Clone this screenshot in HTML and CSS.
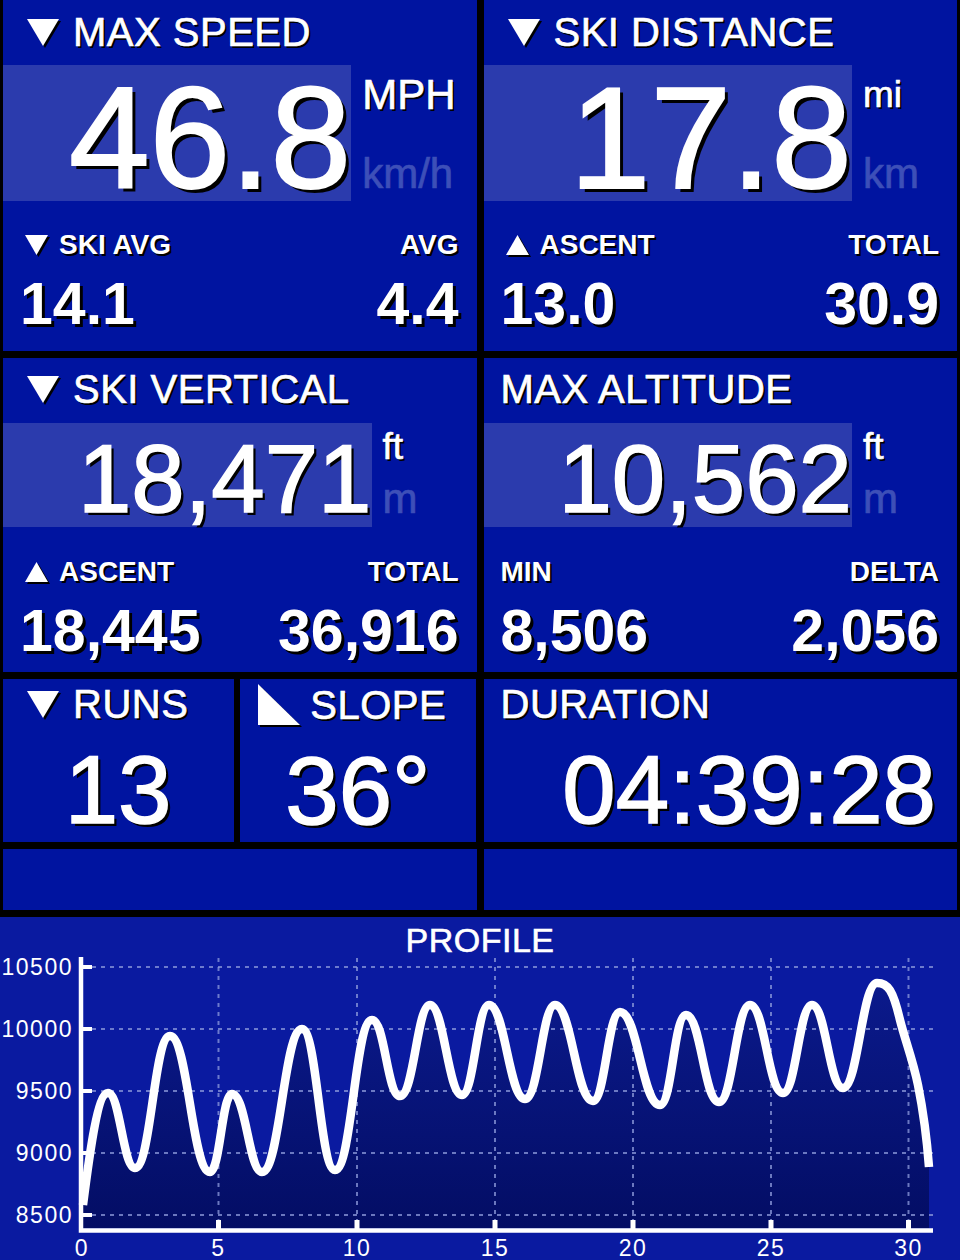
FILE: index.html
```html
<!DOCTYPE html>
<html lang="en">
<head>
  <meta charset="UTF-8">
  <title>Ski Stats</title>
  <link rel="stylesheet" href="styles.css">
</head>
<body>

  <div class="board">

    <!-- Max speed -->
    <div class="panel panel-big">
      <div class="title">
        <svg class="tri tri-title" viewBox="0 0 32 27"><polygon points="0,0 32,0 16,27"/></svg>
        MAX SPEED
      </div>
      <div class="reading">
        <div class="reading-box">46.8</div>
        <div class="units"><span>MPH</span><span class="alt">km/h</span></div>
      </div>
      <div class="stats">
        <div class="stat-row stat-labels">
          <span><svg class="tri tri-label" viewBox="0 0 23 20"><polygon points="0,0 23,0 11.5,20"/></svg>SKI AVG</span>
          <span>AVG</span>
        </div>
        <div class="stat-row stat-values"><span>14.1</span><span>4.4</span></div>
      </div>
    </div>

    <!-- Ski distance -->
    <div class="panel panel-big">
      <div class="title">
        <svg class="tri tri-title" viewBox="0 0 32 27"><polygon points="0,0 32,0 16,27"/></svg>
        SKI DISTANCE
      </div>
      <div class="reading">
        <div class="reading-box">17.8</div>
        <div class="units"><span class="sm">mi</span><span class="alt">km</span></div>
      </div>
      <div class="stats">
        <div class="stat-row stat-labels">
          <span><svg class="tri tri-label" viewBox="0 0 23 20"><polygon points="11.5,0 23,20 0,20"/></svg>ASCENT</span>
          <span>TOTAL</span>
        </div>
        <div class="stat-row stat-values"><span>13.0</span><span>30.9</span></div>
      </div>
    </div>

    <!-- Ski vertical -->
    <div class="panel panel-mid">
      <div class="title">
        <svg class="tri tri-title" viewBox="0 0 32 27"><polygon points="0,0 32,0 16,27"/></svg>
        SKI VERTICAL
      </div>
      <div class="reading">
        <div class="reading-box">18,471</div>
        <div class="units"><span class="sm">ft</span><span class="alt">m</span></div>
      </div>
      <div class="stats">
        <div class="stat-row stat-labels">
          <span><svg class="tri tri-label" viewBox="0 0 23 20"><polygon points="11.5,0 23,20 0,20"/></svg>ASCENT</span>
          <span>TOTAL</span>
        </div>
        <div class="stat-row stat-values"><span>18,445</span><span>36,916</span></div>
      </div>
    </div>

    <!-- Max altitude -->
    <div class="panel panel-mid">
      <div class="title">MAX ALTITUDE</div>
      <div class="reading">
        <div class="reading-box">10,562</div>
        <div class="units"><span class="sm">ft</span><span class="alt">m</span></div>
      </div>
      <div class="stats">
        <div class="stat-row stat-labels"><span>MIN</span><span>DELTA</span></div>
        <div class="stat-row stat-values"><span>8,506</span><span>2,056</span></div>
      </div>
    </div>

    <!-- Runs + slope -->
    <div class="split">
      <div class="panel panel-small">
        <div class="title">
          <svg class="tri tri-title" viewBox="0 0 32 27"><polygon points="0,0 32,0 16,27"/></svg>
          RUNS
        </div>
        <div class="value-lg centered">13</div>
      </div>
      <div class="panel panel-small">
        <div class="title">
          <svg class="tri slope-icon" viewBox="0 0 42 41"><polygon points="0,0 42,41 0,41"/></svg>
          SLOPE
        </div>
        <div class="value-lg centered">36°</div>
      </div>
    </div>

    <!-- Duration -->
    <div class="panel panel-small">
      <div class="title">DURATION</div>
      <div class="value-lg right">04:39:28</div>
    </div>

    <div class="panel"></div>
    <div class="panel"></div>
  </div>

  <!-- Altitude profile -->
  <div class="chart">
    <svg class="chart-svg" viewBox="0 917 960 343" width="960" height="343">
      <defs>
        <linearGradient id="under" x1="0" y1="0" x2="0" y2="1">
          <stop offset="0" stop-color="#0b1a8c"/>
          <stop offset="1" stop-color="#030d64"/>
        </linearGradient>
      </defs>

      <text class="chart-title" x="480" y="952">PROFILE</text>

      <path fill="url(#under)" d="M83,1205 C90,1150 98,1093 108,1093 C120,1093 123,1168 135,1168 C151,1168 154,1036 170,1036 C188,1036 192,1172 210,1172 C220,1172 222,1094 232,1094 C246,1094 249,1172 262,1172 C280,1172 284,1029 302,1029 C317,1029 320,1170 335,1170 C352,1170 355,1020 372,1020 C385,1020 387,1096 400,1096 C414,1096 417,1005 430,1005 C444,1005 448,1095 462,1095 C474,1095 477,1005 489,1005 C505,1005 509,1099 525,1099 C539,1099 542,1005 555,1005 C572,1005 576,1101 593,1101 C605,1101 608,1012 620,1012 C638,1012 642,1105 660,1105 C672,1105 674,1015 686,1015 C701,1015 704,1102 719,1102 C733,1102 736,1005 750,1005 C765,1005 768,1093 783,1093 C796,1093 799,1005 812,1005 C826,1005 829,1088 843,1088 C858,1088 862,983 877,983 C888,983 893,990 900,1020 C905,1040 913,1060 918,1085 C923,1110 927,1140 929,1167 L929,1228 L83,1228 Z"/>

      <g class="grid">
        <line x1="83" y1="967" x2="933" y2="967"/>
        <line x1="83" y1="1029" x2="933" y2="1029"/>
        <line x1="83" y1="1091" x2="933" y2="1091"/>
        <line x1="83" y1="1153" x2="933" y2="1153"/>
        <line x1="83" y1="1215" x2="933" y2="1215"/>
        <line x1="218.5" y1="958" x2="218.5" y2="1226"/>
        <line x1="357" y1="958" x2="357" y2="1226"/>
        <line x1="495" y1="958" x2="495" y2="1226"/>
        <line x1="633" y1="958" x2="633" y2="1226"/>
        <line x1="771" y1="958" x2="771" y2="1226"/>
        <line x1="908.5" y1="958" x2="908.5" y2="1226"/>
      </g>

      <path class="curve" d="M83,1205 C90,1150 98,1093 108,1093 C120,1093 123,1168 135,1168 C151,1168 154,1036 170,1036 C188,1036 192,1172 210,1172 C220,1172 222,1094 232,1094 C246,1094 249,1172 262,1172 C280,1172 284,1029 302,1029 C317,1029 320,1170 335,1170 C352,1170 355,1020 372,1020 C385,1020 387,1096 400,1096 C414,1096 417,1005 430,1005 C444,1005 448,1095 462,1095 C474,1095 477,1005 489,1005 C505,1005 509,1099 525,1099 C539,1099 542,1005 555,1005 C572,1005 576,1101 593,1101 C605,1101 608,1012 620,1012 C638,1012 642,1105 660,1105 C672,1105 674,1015 686,1015 C701,1015 704,1102 719,1102 C733,1102 736,1005 750,1005 C765,1005 768,1093 783,1093 C796,1093 799,1005 812,1005 C826,1005 829,1088 843,1088 C858,1088 862,983 877,983 C888,983 893,990 900,1020 C905,1040 913,1060 918,1085 C923,1110 927,1140 929,1167"/>

      <g class="axis">
        <path d="M81,957 V1230.5 H933"/>
        <path class="tick" d="M83,967 H92 M83,1029 H92 M83,1091 H92 M83,1153 H92 M83,1215 H92"/>
        <path class="tick-x" d="M218.5,1220 V1229 M357,1220 V1229 M495,1220 V1229 M633,1220 V1229 M771,1220 V1229 M908.5,1220 V1229"/>
      </g>

      <g class="y-labels">
        <text x="73" y="975">10500</text>
        <text x="73" y="1037">10000</text>
        <text x="73" y="1099">9500</text>
        <text x="73" y="1161">9000</text>
        <text x="73" y="1223">8500</text>
      </g>
      <g class="x-labels">
        <text x="82" y="1256">0</text>
        <text x="218.5" y="1256">5</text>
        <text x="357" y="1256">10</text>
        <text x="495" y="1256">15</text>
        <text x="633" y="1256">20</text>
        <text x="771" y="1256">25</text>
        <text x="908.5" y="1256">30</text>
      </g>
    </svg>
  </div>

</body>
</html>
```

FILE: styles.css
```css
body {
  margin: 0;
  background: #000;
  color: white;
  font-family: 'Liberation Sans', Arial, sans-serif;
}

.board {
  display: grid;
  grid-template-columns: 1fr 1fr;
  grid-template-rows: 351px 314px 163px 61px;
  gap: 7px;
  padding: 0 3px;
}

.panel {
  background: #0014a0;
  padding: 0 18px 0 17px;
  min-width: 0;
}

.split {
  display: grid;
  grid-template-columns: 231fr 236fr;
  gap: 6px;
}

/* headings */
.title {
  display: flex;
  align-items: center;
  font-size: 40px;
  line-height: 40px;
  letter-spacing: 0.5px;
  white-space: nowrap;
  -webkit-text-stroke: 0.7px white;
  text-shadow: 2px 2px 0 #000;
}

.panel-big .title {
  padding-top: 12px;
}

.panel-mid .title {
  padding-top: 11px;
}

.panel-small .title {
  padding-top: 5px;
}

.tri {
  fill: white;
  flex: none;
  filter: drop-shadow(2px 2px 0 #000);
}

.tri-title {
  width: 32px;
  height: 27px;
  margin: 0 14px 0 7px;
}

.tri-label {
  width: 23px;
  height: 20px;
  margin: 0 11px 0 5px;
}

.slope-icon {
  width: 42px;
  height: 41px;
  margin: 0 10px 0 1px;
}

/* main reading with highlighted box */
.reading {
  display: flex;
  height: 136px;
  margin: 13px -18px 0 -17px;
}

.panel-mid .reading {
  height: 104px;
  margin-top: 14px;
}

.reading-box {
  flex: 1;
  box-sizing: border-box;
  background: #2b3bad;
  text-align: right;
  font-size: 145px;
  line-height: 126px;
  padding-top: 10px;
  white-space: nowrap;
  -webkit-text-stroke: 2px white;
  text-shadow: 4px 4px 0 #000;
}

.panel-mid .reading-box {
  font-size: 96px;
  line-height: 96px;
  padding-top: 8px;
  -webkit-text-stroke: 1.5px white;
  text-shadow: 3px 3px 0 #000;
}

.units {
  min-width: 105px;
  box-sizing: border-box;
  display: flex;
  flex-direction: column;
  justify-content: space-between;
  padding: 10px 21px 7px 11px;
  font-size: 42px;
  line-height: 40px;
  -webkit-text-stroke: 0.7px white;
  text-shadow: 2px 2px 0 #000;
}

.panel-mid .units {
  padding: 4px 21px 8px 11px;
}

.units .sm {
  font-size: 37px;
}

.units .alt {
  color: #3d4fb8;
  -webkit-text-stroke: 0.7px #3d4fb8;
  text-shadow: none;
}

/* secondary numbers */
.stats {
  margin-top: 30px;
}

.panel-mid .stats {
  margin-top: 31px;
}

.stat-row {
  display: flex;
  justify-content: space-between;
  align-items: center;
  white-space: nowrap;
}

.stat-labels {
  font-size: 28px;
  line-height: 28px;
  font-weight: bold;
  text-shadow: 2px 2px 0 #000;
}

.stat-labels span {
  display: flex;
  align-items: center;
}

.stat-values {
  margin-top: 17px;
  font-size: 59px;
  line-height: 57px;
  font-weight: bold;
  text-shadow: 3px 3px 0 #000;
}

.value-lg {
  margin-top: 18px;
  font-size: 96px;
  line-height: 96px;
  white-space: nowrap;
  -webkit-text-stroke: 1.5px white;
  text-shadow: 3px 3px 0 #000;
}

.value-lg.centered {
  text-align: center;
}

.value-lg.right {
  text-align: right;
  padding-right: 3px;
}

/* profile chart */
.chart {
  margin-top: 7px;
  height: 343px;
  background: #0a1aa0;
}

.chart-svg {
  display: block;
}

.chart-title {
  fill: white;
  stroke: white;
  stroke-width: 0.6;
  font-size: 34px;
  letter-spacing: 0.5px;
  text-anchor: middle;
}

.grid line {
  stroke: #8f9cdc;
  stroke-opacity: 0.75;
  stroke-width: 2;
  stroke-dasharray: 4 5;
}

.curve {
  fill: none;
  stroke: white;
  stroke-width: 8.5;
  stroke-linejoin: round;
}

.axis path {
  fill: none;
  stroke: white;
  stroke-width: 4.5;
}

.axis .tick {
  stroke-width: 4;
}

.axis .tick-x {
  stroke-width: 5;
}

.y-labels text,
.x-labels text {
  fill: white;
  font-size: 23px;
  letter-spacing: 1.5px;
}

.y-labels text {
  text-anchor: end;
}

.x-labels text {
  text-anchor: middle;
}
```
